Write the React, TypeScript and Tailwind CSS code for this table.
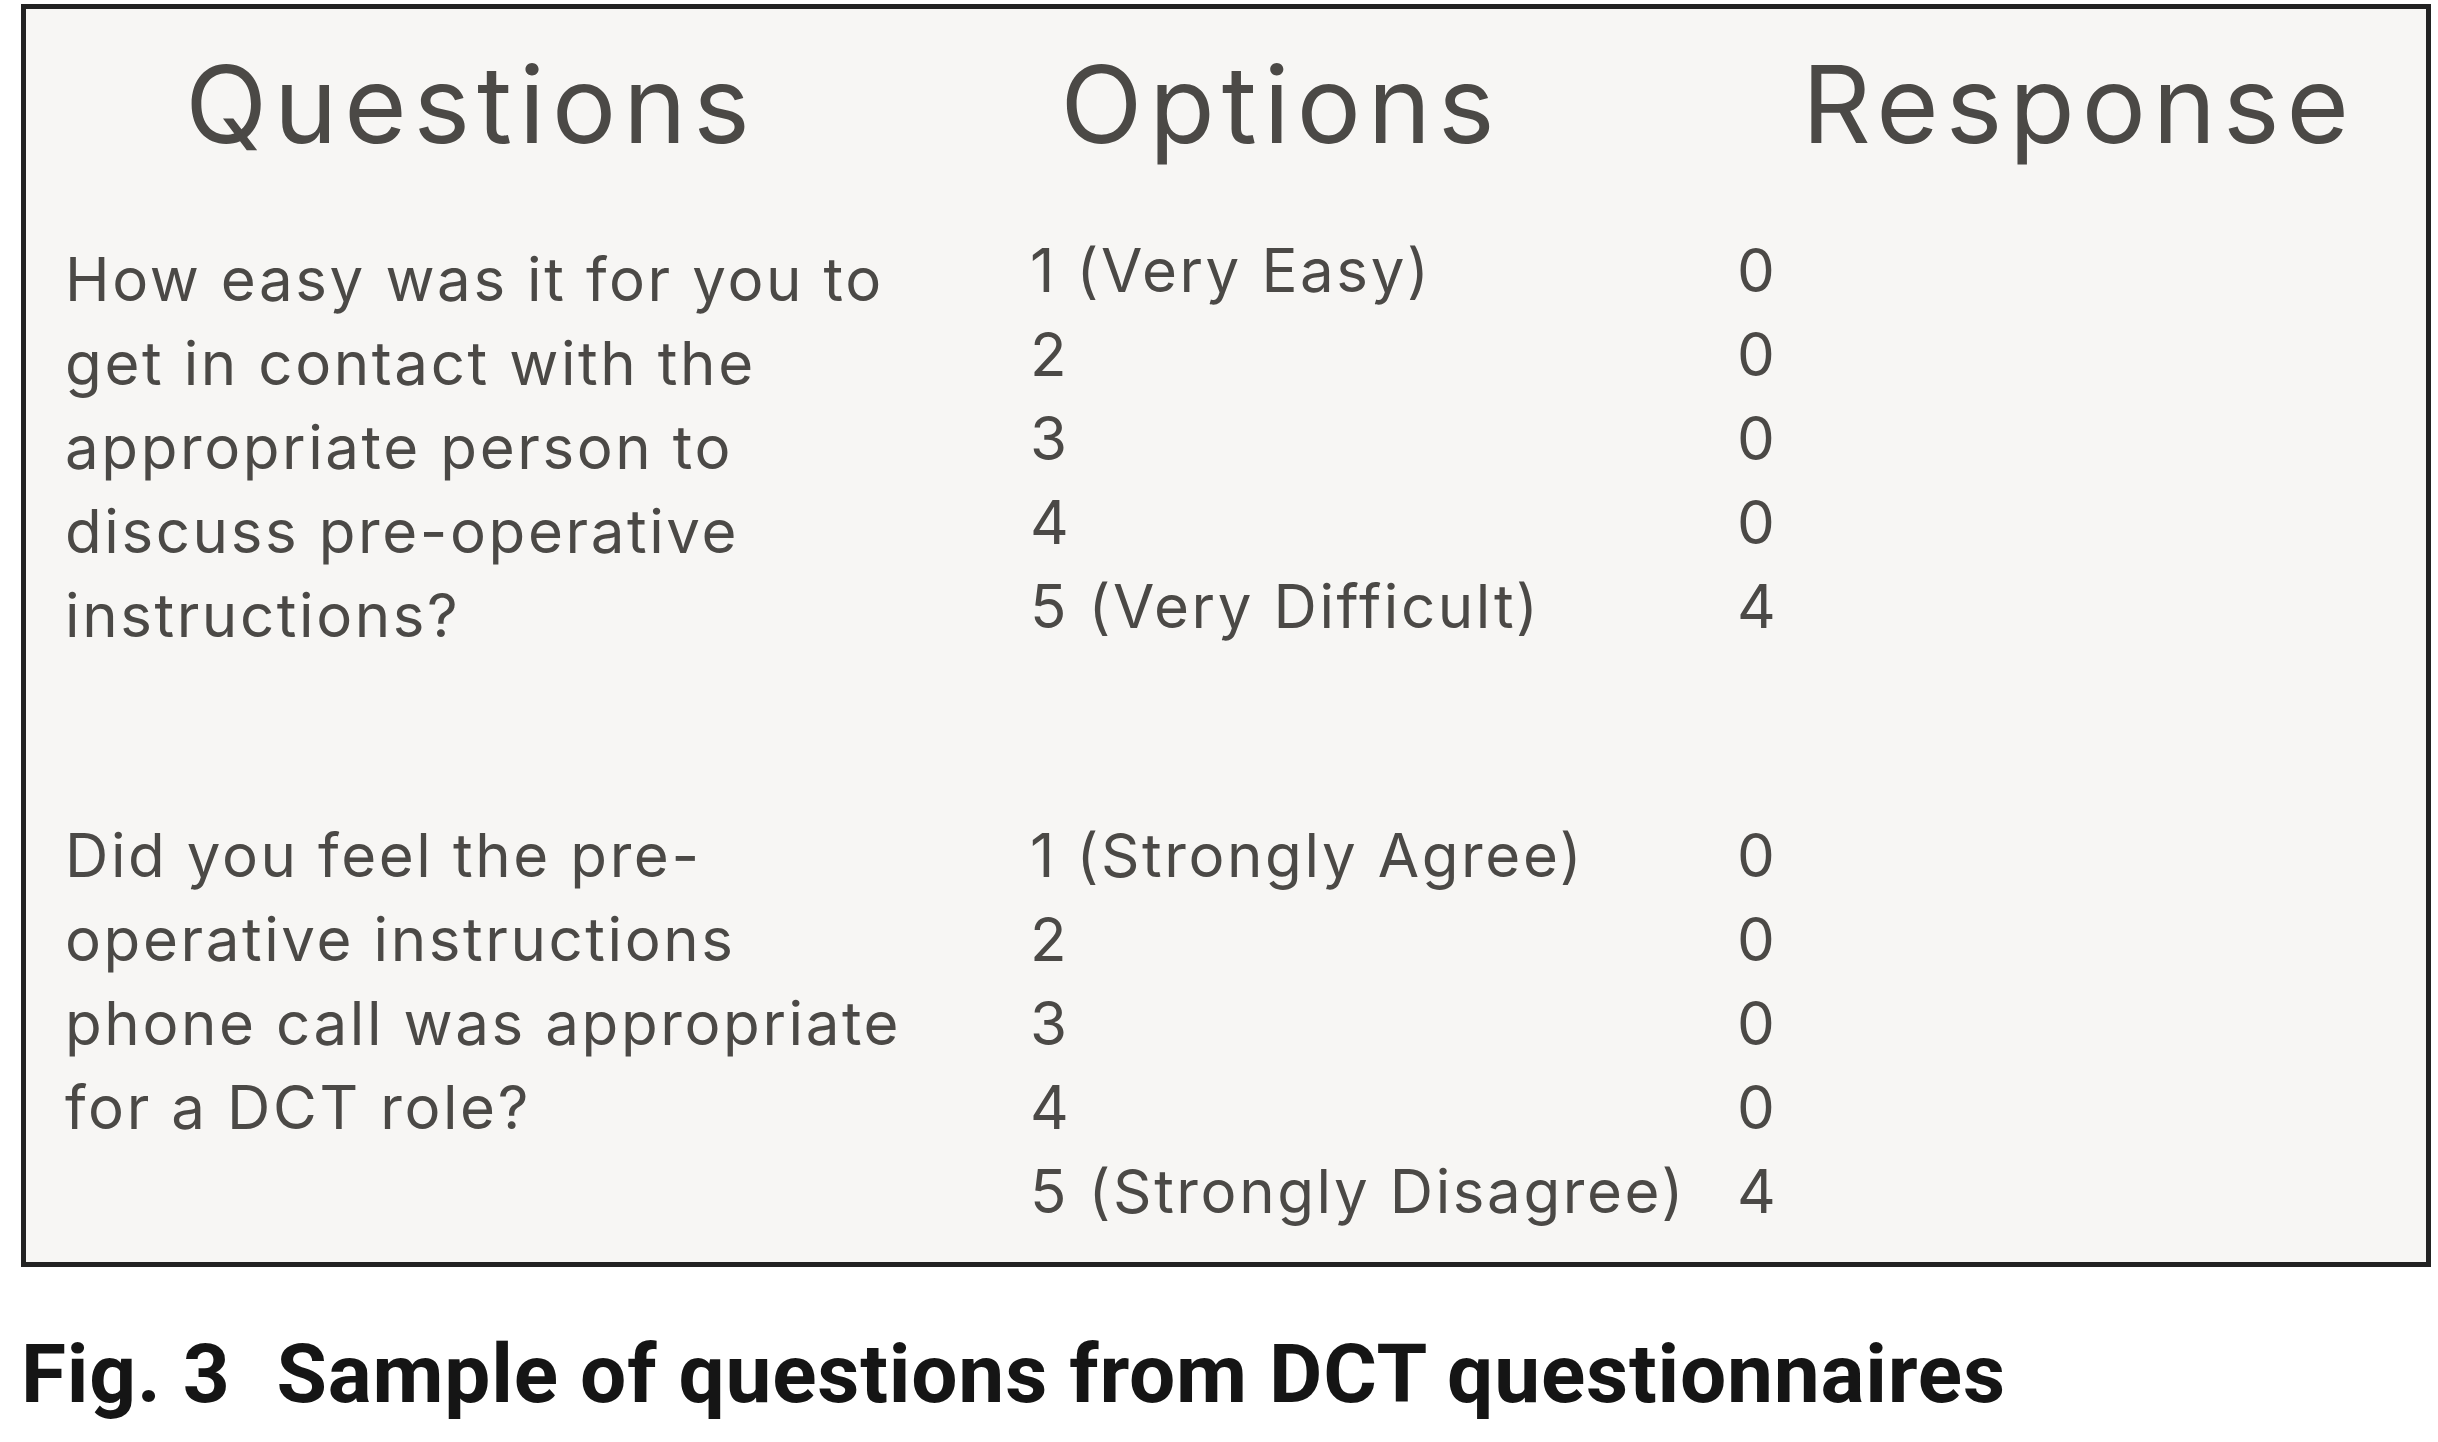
import React from "react";

const g1q = [
  "How easy was it for you to",
  "get in contact with the",
  "appropriate person to",
  "discuss pre-operative",
  "instructions?",
];
const g1o = ["1 (Very Easy)", "2", "3", "4", "5 (Very Difficult)"];
const g1r = ["0", "0", "0", "0", "4"];

const g2q = [
  "Did you feel the pre-",
  "operative instructions",
  "phone call was appropriate",
  "for a DCT role?",
];
const g2o = ["1 (Strongly Agree)", "2", "3", "4", "5 (Strongly Disagree)"];
const g2r = ["0", "0", "0", "0", "4"];

function Group({
  q,
  o,
  r,
  qOffset,
}: {
  q: string[];
  o: string[];
  r: string[];
  qOffset: boolean;
}) {
  return (
    <div className="grid grid-cols-[965px_707px_1fr] text-[60px] leading-[84px] tracking-[2.6px]">
      <div className={qOffset ? "pt-[9px]" : ""}>
        {q.map((l, i) => (
          <div key={i} className="whitespace-nowrap">
            {l}
          </div>
        ))}
      </div>
      <div>
        {o.map((l, i) => (
          <div key={i} className="whitespace-nowrap">
            {l}
          </div>
        ))}
      </div>
      <div>
        {r.map((l, i) => (
          <div key={i}>{l}</div>
        ))}
      </div>
    </div>
  );
}

export default function App() {
  return (
    <div className="w-[2438px] h-[1442px] bg-white pt-[4px] pl-[21px]">
      <div
        className="w-[2410px] h-[1263px] border-[5px] border-[#222222] bg-[#f7f6f4] text-[#4b4946]"
        style={{ fontFamily: "Inter, 'Open Sans', sans-serif" }}
      >
        <div className="flex mt-[42px] text-[107px] leading-[107px] font-normal tracking-[7px]">
          <div className="w-[890px] text-center">Questions</div>
          <div className="w-[730px] text-center">Options</div>
          <div className="w-[680px] ml-[93px] text-center">Response</div>
        </div>
        <div className="mt-[70px] pl-[39px]">
          <Group q={g1q} o={g1o} r={g1r} qOffset={true} />
          <div className="h-[156px]" />
          <Group q={g2q} o={g2o} r={g2r} qOffset={false} />
        </div>
      </div>
      <div
        className="mt-[66px] pl-[0px] text-[82px] leading-[82px] font-bold text-[#151515] whitespace-nowrap tracking-[0.8px]"
        style={{ fontFamily: "Roboto, 'Liberation Sans', sans-serif" }}
      >
        <span>Fig. 3</span>
        <span className="ml-[46px]">Sample of questions from DCT questionnaires</span>
      </div>
    </div>
  );
}
